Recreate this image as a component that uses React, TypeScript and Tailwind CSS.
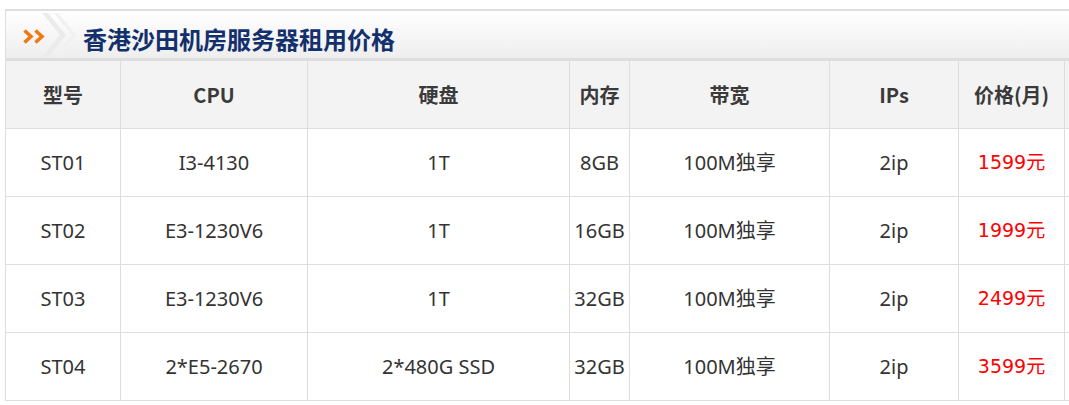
import React from 'react';

const rows = [
  { model: 'ST01', cpu: 'I3-4130', disk: '1T', mem: '8GB', bw: '100M独享', ips: '2ip', price: '1599元' },
  { model: 'ST02', cpu: 'E3-1230V6', disk: '1T', mem: '16GB', bw: '100M独享', ips: '2ip', price: '1999元' },
  { model: 'ST03', cpu: 'E3-1230V6', disk: '1T', mem: '32GB', bw: '100M独享', ips: '2ip', price: '2499元' },
  { model: 'ST04', cpu: '2*E5-2670', disk: '2*480G SSD', mem: '32GB', bw: '100M独享', ips: '2ip', price: '3599元' },
];

const cols = [115, 187, 262, 60, 200, 129, 106, 40];

function Arrows() {
  return (
    <svg width="70" height="48" viewBox="0 0 70 48" className="shrink-0">
      {/* faint background chevrons */}
      <path d="M36 2 L54 24 L36 46 L42 46 L60 24 L42 2 Z" fill="#ebebeb" />
      <path d="M48 2 L66 24 L48 46 L52 46 L70 24 L52 2 Z" fill="#f1f1f1" />
      {/* orange double chevron */}
      <path d="M18.5 19.5 L25 25.5 L18.5 31.5" fill="none" stroke="#f07a10" strokeWidth="3.6" strokeLinejoin="miter" />
      <path d="M29.5 19.5 L36 25.5 L29.5 31.5" fill="none" stroke="#f07a10" strokeWidth="3.6" strokeLinejoin="miter" />
    </svg>
  );
}

export default function App() {
  return (
    <div className="w-[1069px] h-[405px] overflow-hidden bg-white pl-[5px] pt-[9px]" style={{ fontFamily: '"Noto Sans", "Noto Sans CJK SC", sans-serif' }}>
      <div className="w-[1100px]">
        <div className="h-[51px] flex items-center bg-gradient-to-b from-white to-[#eeeeee] border-t-2 border-l border-b-2 border-[#dedede]">
          <Arrows />
          <h2 className="ml-[7px] mt-[8px] text-[24px] leading-none font-bold text-[#12306c]" style={{ fontFamily: '"Noto Sans CJK SC", sans-serif' }}>
            香港沙田机房服务器租用价格
          </h2>
        </div>
        <table className="w-[1099px] table-fixed border-collapse text-[20px] text-[#333]">
          <colgroup>
            {cols.map((w, i) => (
              <col key={i} style={{ width: w }} />
            ))}
          </colgroup>
          <thead>
            <tr className="h-[68px] bg-[#f3f3f3]">
              {['型号', 'CPU', '硬盘', '内存', '带宽', 'IPs', '价格(月)', ''].map((h, i) => (
                <th key={i} className="border border-[#dddddd] font-bold text-[#3a3a3a] p-0 text-center" style={{ fontFamily: '"Noto Sans CJK SC", sans-serif' }}>
                  {h}
                </th>
              ))}
            </tr>
          </thead>
          <tbody>
            {rows.map((r) => (
              <tr key={r.model} className="h-[68px]">
                <td className="border border-[#dddddd] text-center p-0">{r.model}</td>
                <td className="border border-[#dddddd] text-center p-0">{r.cpu}</td>
                <td className="border border-[#dddddd] text-center p-0">{r.disk}</td>
                <td className="border border-[#dddddd] text-center p-0">{r.mem}</td>
                <td className="border border-[#dddddd] text-center p-0">{r.bw}</td>
                <td className="border border-[#dddddd] text-center p-0">{r.ips}</td>
                <td className="border border-[#dddddd] text-center p-0 text-[19px] text-[#ff0000]" style={{ fontFamily: '"DejaVu Sans", "Noto Sans CJK SC", sans-serif' }}>
                  {r.price}
                </td>
                <td className="border border-[#dddddd] p-0"></td>
              </tr>
            ))}
          </tbody>
        </table>
      </div>
    </div>
  );
}
